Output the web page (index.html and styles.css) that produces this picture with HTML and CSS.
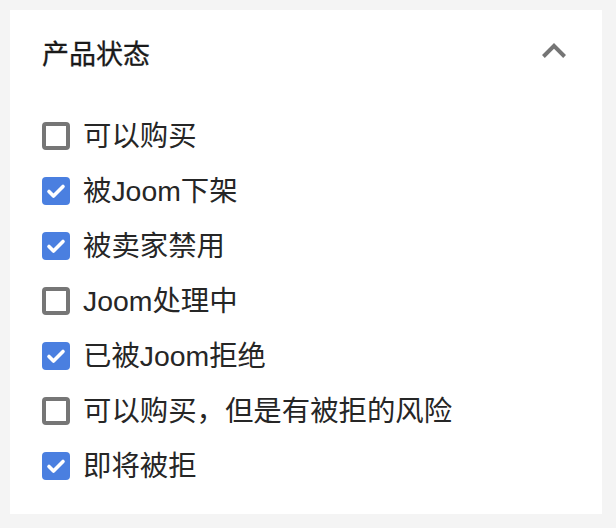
FILE: index.html
```html
<!DOCTYPE html>
<html lang="zh-CN">
<head>
<meta charset="utf-8">
<link rel="stylesheet" href="styles.css">
</head>
<body>
<div class="card">
  <div class="header">
    <span class="title">产品状态</span>
    <svg class="chevron" width="24" height="15" viewBox="6 8 12 7.41"><path d="M12 8l-6 6 1.41 1.41L12 10.83l4.59 4.58L18 14z"/></svg>
  </div>
  <ul class="list">
    <li class="item"><span class="box"></span><span class="label">可以购买</span></li>
    <li class="item"><span class="box checked"><svg viewBox="0 0 28 28"><path d="M7 14.5l4.5 4.5L21 9.5"/></svg></span><span class="label">被Joom下架</span></li>
    <li class="item"><span class="box checked"><svg viewBox="0 0 28 28"><path d="M7 14.5l4.5 4.5L21 9.5"/></svg></span><span class="label">被卖家禁用</span></li>
    <li class="item"><span class="box"></span><span class="label">Joom处理中</span></li>
    <li class="item"><span class="box checked"><svg viewBox="0 0 28 28"><path d="M7 14.5l4.5 4.5L21 9.5"/></svg></span><span class="label">已被Joom拒绝</span></li>
    <li class="item"><span class="box"></span><span class="label">可以购买，但是有被拒的风险</span></li>
    <li class="item"><span class="box checked"><svg viewBox="0 0 28 28"><path d="M7 14.5l4.5 4.5L21 9.5"/></svg></span><span class="label">即将被拒</span></li>
  </ul>
</div>
</body>
</html>
```
FILE: styles.css
```css
html, body {
  margin: 0;
  padding: 0;
}
body {
  background: #f4f4f4;
  padding: 10px;
  font-family: "Liberation Sans", "Noto Sans CJK SC", sans-serif;
  color: #222222;
}
.card {
  width: 592px;
  height: 504px;
  box-sizing: border-box;
  background: #ffffff;
  padding: 0 24px 0 32px;
}
.header {
  height: 90px;
  display: flex;
  align-items: center;
  justify-content: space-between;
}
.title {
  font-size: 27px;
  font-weight: 400;
  line-height: 32px;
  color: #1a1a1a;
  -webkit-text-stroke: 0.3px #1a1a1a;
}
.chevron {
  fill: #757575;
  margin-bottom: 10px;
  margin-right: 12px;
}
.list {
  list-style: none;
  margin: 8px 0 0 0;
  padding: 0;
}
.item {
  height: 55px;
  display: flex;
  align-items: center;
  gap: 13px;
}
.box {
  width: 28px;
  height: 28px;
  box-sizing: border-box;
  border: 4px solid #767676;
  border-radius: 4px;
  flex: none;
}
.box.checked {
  border: none;
  background: #4a7fe0;
}
.box svg {
  display: block;
  width: 28px;
  height: 28px;
  fill: none;
  stroke: #ffffff;
  stroke-width: 3.6;
  stroke-linecap: round;
  stroke-linejoin: round;
}
.label {
  font-size: 28.4px;
  line-height: 34px;
  color: #262626;
}
```
